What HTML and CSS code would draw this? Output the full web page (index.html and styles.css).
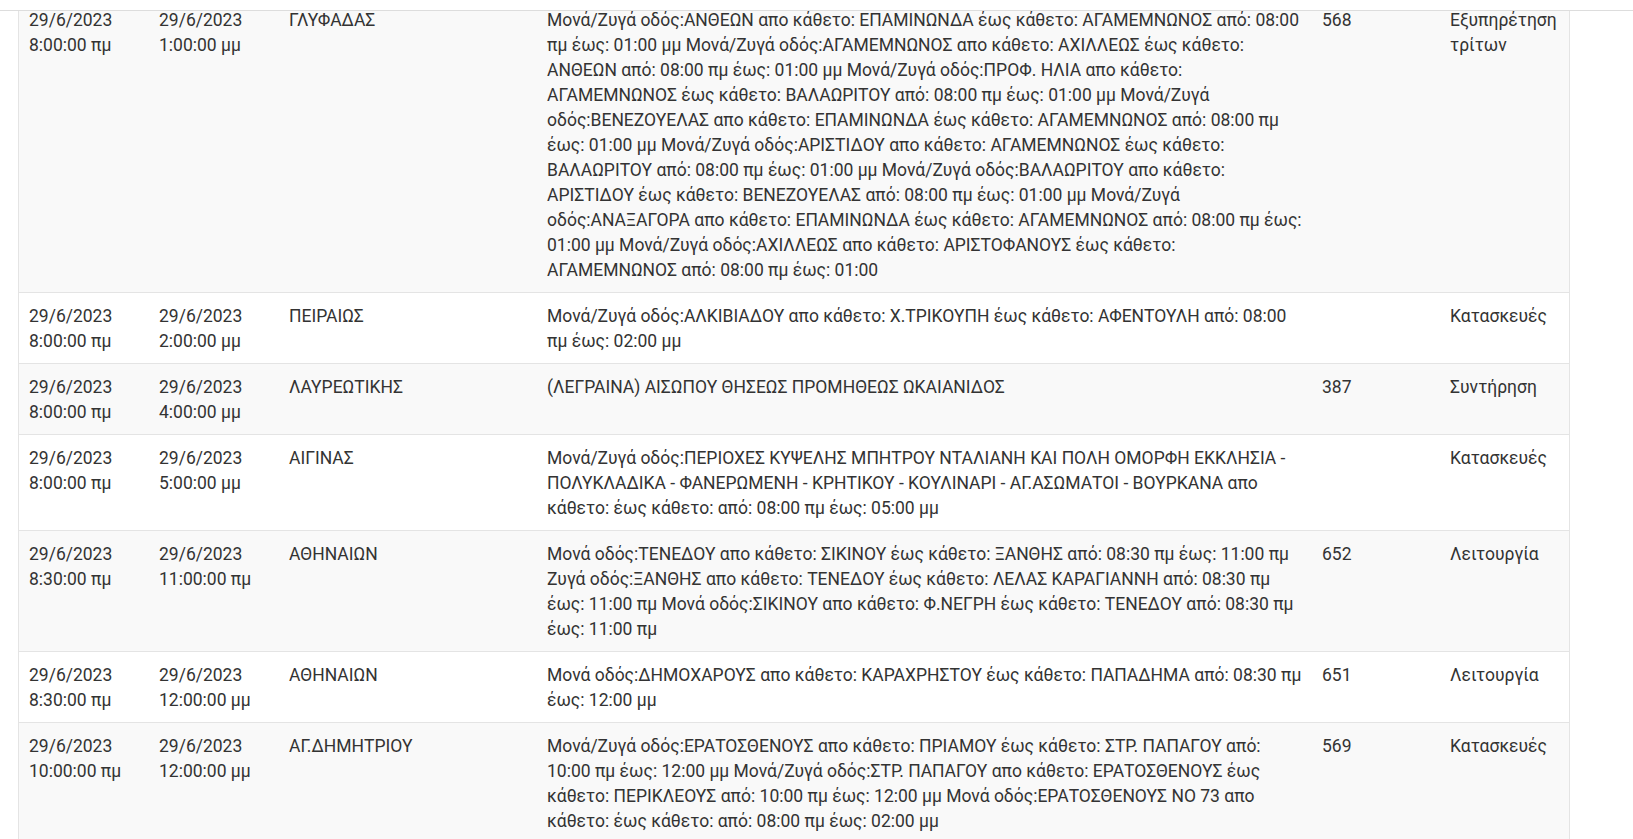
FILE: index.html
```html
<!DOCTYPE html>
<html lang="el">
<head>
<meta charset="utf-8">
<title>Διακοπές κυκλοφορίας</title>
<link rel="stylesheet" href="styles.css">
</head>
<body>
<div class="topbar"></div>
<div class="table-wrap">
<table class="works">
<colgroup>
<col class="c-start"><col class="c-end"><col class="c-muni"><col class="c-desc"><col class="c-num"><col class="c-type">
</colgroup>
<tbody>
<tr>
<td>29/6/2023 8:00:00 πμ</td>
<td>29/6/2023 1:00:00 μμ</td>
<td>ΓΛΥΦΑΔΑΣ</td>
<td>Μονά/Ζυγά οδός:ΑΝΘΕΩΝ απο κάθετο: ΕΠΑΜΙΝΩΝΔΑ έως κάθετο: ΑΓΑΜΕΜΝΩΝΟΣ από: 08:00 πμ έως: 01:00 μμ Μονά/Ζυγά οδός:ΑΓΑΜΕΜΝΩΝΟΣ απο κάθετο: ΑΧΙΛΛΕΩΣ έως κάθετο: ΑΝΘΕΩΝ από: 08:00 πμ έως: 01:00 μμ Μονά/Ζυγά οδός:ΠΡΟΦ. ΗΛΙΑ απο κάθετο: ΑΓΑΜΕΜΝΩΝΟΣ έως κάθετο: ΒΑΛΑΩΡΙΤΟΥ από: 08:00 πμ έως: 01:00 μμ Μονά/Ζυγά οδός:ΒΕΝΕΖΟΥΕΛΑΣ απο κάθετο: ΕΠΑΜΙΝΩΝΔΑ έως κάθετο: ΑΓΑΜΕΜΝΩΝΟΣ από: 08:00 πμ έως: 01:00 μμ Μονά/Ζυγά οδός:ΑΡΙΣΤΙΔΟΥ απο κάθετο: ΑΓΑΜΕΜΝΩΝΟΣ έως κάθετο: ΒΑΛΑΩΡΙΤΟΥ από: 08:00 πμ έως: 01:00 μμ Μονά/Ζυγά οδός:ΒΑΛΑΩΡΙΤΟΥ απο κάθετο: ΑΡΙΣΤΙΔΟΥ έως κάθετο: ΒΕΝΕΖΟΥΕΛΑΣ από: 08:00 πμ έως: 01:00 μμ Μονά/Ζυγά οδός:ΑΝΑΞΑΓΟΡΑ απο κάθετο: ΕΠΑΜΙΝΩΝΔΑ έως κάθετο: ΑΓΑΜΕΜΝΩΝΟΣ από: 08:00 πμ έως: 01:00 μμ Μονά/Ζυγά οδός:ΑΧΙΛΛΕΩΣ απο κάθετο: ΑΡΙΣΤΟΦΑΝΟΥΣ έως κάθετο: ΑΓΑΜΕΜΝΩΝΟΣ από: 08:00 πμ έως: 01:00</td>
<td>568</td>
<td>Εξυπηρέτηση τρίτων</td>
</tr>
<tr>
<td>29/6/2023 8:00:00 πμ</td>
<td>29/6/2023 2:00:00 μμ</td>
<td>ΠΕΙΡΑΙΩΣ</td>
<td>Μονά/Ζυγά οδός:ΑΛΚΙΒΙΑΔΟΥ απο κάθετο: Χ.ΤΡΙΚΟΥΠΗ έως κάθετο: ΑΦΕΝΤΟΥΛΗ από: 08:00 πμ έως: 02:00 μμ</td>
<td></td>
<td>Κατασκευές</td>
</tr>
<tr>
<td>29/6/2023 8:00:00 πμ</td>
<td>29/6/2023 4:00:00 μμ</td>
<td>ΛΑΥΡΕΩΤΙΚΗΣ</td>
<td>(ΛΕΓΡΑΙΝΑ) ΑΙΣΩΠΟΥ ΘΗΣΕΩΣ ΠΡΟΜΗΘΕΩΣ ΩΚΑΙΑΝΙΔΟΣ</td>
<td>387</td>
<td>Συντήρηση</td>
</tr>
<tr>
<td>29/6/2023 8:00:00 πμ</td>
<td>29/6/2023 5:00:00 μμ</td>
<td>ΑΙΓΙΝΑΣ</td>
<td>Μονά/Ζυγά οδός:ΠΕΡΙΟΧΕΣ ΚΥΨΕΛΗΣ ΜΠΗΤΡΟΥ ΝΤΑΛΙΑΝΗ ΚΑΙ ΠΟΛΗ ΟΜΟΡΦΗ ΕΚΚΛΗΣΙΑ - ΠΟΛΥΚΛΑΔΙΚΑ - ΦΑΝΕΡΩΜΕΝΗ - ΚΡΗΤΙΚΟΥ - ΚΟΥΛΙΝΑΡΙ - ΑΓ.ΑΣΩΜΑΤΟΙ - ΒΟΥΡΚΑΝΑ απο κάθετο: έως κάθετο: από: 08:00 πμ έως: 05:00 μμ</td>
<td></td>
<td>Κατασκευές</td>
</tr>
<tr>
<td>29/6/2023 8:30:00 πμ</td>
<td>29/6/2023 11:00:00 πμ</td>
<td>ΑΘΗΝΑΙΩΝ</td>
<td>Μονά οδός:ΤΕΝΕΔΟΥ απο κάθετο: ΣΙΚΙΝΟΥ έως κάθετο: ΞΑΝΘΗΣ από: 08:30 πμ έως: 11:00 πμ Ζυγά οδός:ΞΑΝΘΗΣ απο κάθετο: ΤΕΝΕΔΟΥ έως κάθετο: ΛΕΛΑΣ ΚΑΡΑΓΙΑΝΝΗ από: 08:30 πμ έως: 11:00 πμ Μονά οδός:ΣΙΚΙΝΟΥ απο κάθετο: Φ.ΝΕΓΡΗ έως κάθετο: ΤΕΝΕΔΟΥ από: 08:30 πμ έως: 11:00 πμ</td>
<td>652</td>
<td>Λειτουργία</td>
</tr>
<tr>
<td>29/6/2023 8:30:00 πμ</td>
<td>29/6/2023 12:00:00 μμ</td>
<td>ΑΘΗΝΑΙΩΝ</td>
<td>Μονά οδός:ΔΗΜΟΧΑΡΟΥΣ απο κάθετο: ΚΑΡΑΧΡΗΣΤΟΥ έως κάθετο: ΠΑΠΑΔΗΜΑ από: 08:30 πμ έως: 12:00 μμ</td>
<td>651</td>
<td>Λειτουργία</td>
</tr>
<tr>
<td>29/6/2023 10:00:00 πμ</td>
<td>29/6/2023 12:00:00 μμ</td>
<td>ΑΓ.ΔΗΜΗΤΡΙΟΥ</td>
<td>Μονά/Ζυγά οδός:ΕΡΑΤΟΣΘΕΝΟΥΣ απο κάθετο: ΠΡΙΑΜΟΥ έως κάθετο: ΣΤΡ. ΠΑΠΑΓΟΥ από: 10:00 πμ έως: 12:00 μμ Μονά/Ζυγά οδός:ΣΤΡ. ΠΑΠΑΓΟΥ απο κάθετο: ΕΡΑΤΟΣΘΕΝΟΥΣ έως κάθετο: ΠΕΡΙΚΛΕΟΥΣ από: 10:00 πμ έως: 12:00 μμ Μονά οδός:ΕΡΑΤΟΣΘΕΝΟΥΣ ΝΟ 73 απο κάθετο: έως κάθετο: από: 08:00 πμ έως: 02:00 μμ</td>
<td>569</td>
<td>Κατασκευές</td>
</tr>
</tbody>
</table>
</div>
</body>
</html>
```

FILE: styles.css
```css
html, body {
  margin: 0;
  padding: 0;
  background: #ffffff;
}

body {
  font-family: Roboto, "Noto Sans", "DejaVu Sans", sans-serif;
  font-size: 17.5px;
  line-height: 25px;
  color: #333333;
  overflow: hidden;
}

.topbar {
  position: fixed;
  top: 0;
  left: 0;
  right: 0;
  height: 10px;
  background: #ffffff;
  border-bottom: 1px solid #dddddd;
  z-index: 2;
}

.table-wrap {
  box-sizing: border-box;
  margin: -4px 0 0 18px;
  width: 1552px;
  border-left: 1px solid #e4e4e4;
  border-right: 1px solid #e4e4e4;
}

.works {
  width: 100%;
  table-layout: fixed;
  border-collapse: collapse;
}

.c-start { width: 130px; }
.c-end { width: 130px; }
.c-muni { width: 258px; }
.c-desc { width: 775px; }
.c-num { width: 128px; }
.c-type { width: 129px; }

.works td {
  vertical-align: top;
  padding: 11px 10px 9px;
  border-top: 1px solid #e4e4e4;
  text-align: left;
}

.works tr:nth-child(odd) td {
  background: #f9f9f9;
}
```
